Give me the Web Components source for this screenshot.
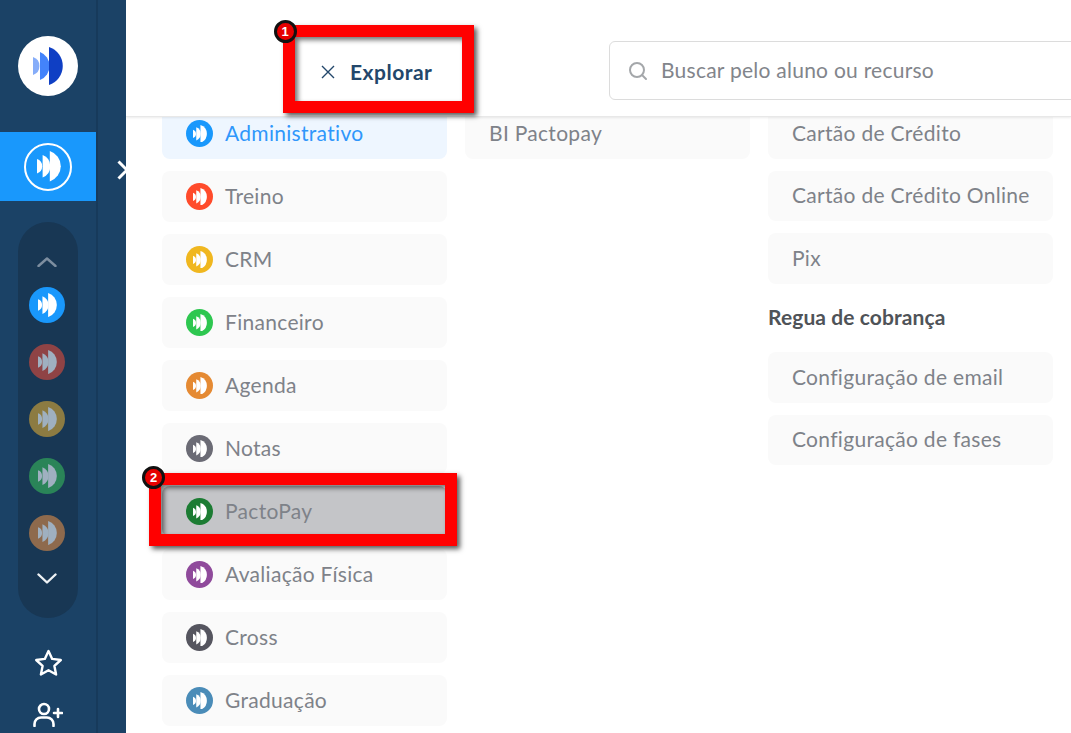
<!DOCTYPE html>
<html lang="pt">
<head>
<meta charset="utf-8">
<title>Explorar</title>
<style>
html, body {
    margin: 0;
    height: 733px;
    overflow: hidden;
    background: white;
    font-family: "Lato", "Noto Sans", sans-serif;
}
#page {
    display: flex;
    height: 733px;
}
</style>
</head>
<body>
<div id="page">
    <app-sidebar></app-sidebar>
    <app-main></app-main>
</div>

<script>
const GLYPH = `
<path class="a" d="M0 10A9.5 9.5 0 0 1 0 28Z"/>
<path class="b" d="M7 5A15 15 0 0 1 7 33Z"/>
<path class="c" d="M16 0A20 20 0 0 1 16 38Z"/>`

// round coloured badge with the three-sail glyph
class MarkIcon extends HTMLElement {
    constructor() {
        super()
        const size = this.getAttribute('size') || 27
        const color = this.getAttribute('color') || '#1998fc'
        const ink = this.getAttribute('ink') || '#ffffff'
        const glyph = this.getAttribute('glyph') || size * 0.52
        this.attachShadow({mode: 'open'}).innerHTML = `
<style>
:host {
    display: flex;
    flex: none;
    align-items: center;
    justify-content: center;
    width: ${size}px;
    height: ${size}px;
    border-radius: 50%;
    background: ${color};
}
svg {
    display: block;
    fill: ${ink};
    margin-left: 1px;
}
</style>
<svg width="${glyph}" viewBox="0 0 30 38">${GLYPH}</svg>`
    }
}
customElements.define('mark-icon', MarkIcon)

class AppSidebar extends HTMLElement {
    constructor() {
        super()
        const dim = [['#8f4345'], ['#8c7b42'], ['#2a8458'], ['#8e6a4d']]
        this.attachShadow({mode: 'open'}).innerHTML = `
<style>
:host {
    display: block;
    flex: none;
    position: relative;
    width: 126px;
    height: 733px;
    overflow: hidden;
    background: #1b4266;
}
#rail {
    box-sizing: content-box;
    width: 96px;
    height: 733px;
    border-right: 2px solid #173a5b;
    display: flex;
    flex-direction: column;
    align-items: center;
}
#logo {
    margin-top: 36px;
    width: 60px;
    height: 60px;
    border-radius: 50%;
    background: white;
    display: flex;
    align-items: center;
    justify-content: center;
}
#logo svg { display: block; margin-left: -1px; }
#logo .a { fill: #86adf9; }
#logo .b { fill: #4383fb; }
#logo .c { fill: #0f3fc4; }
#active {
    margin-top: 36px;
    width: 96px;
    height: 69px;
    background: #1998fc;
    display: flex;
    align-items: center;
    justify-content: center;
}
#ring {
    box-sizing: border-box;
    width: 48px;
    height: 48px;
    border: 2px solid white;
    border-radius: 50%;
    display: flex;
    align-items: center;
    justify-content: center;
}
#ring svg { display: block; fill: white; margin-left: 2px; }
#pill {
    box-sizing: border-box;
    margin-top: 21px;
    width: 60px;
    height: 396px;
    border-radius: 30px;
    background: #183754;
    padding-top: 35px;
    display: flex;
    flex-direction: column;
    align-items: center;
}
#pill mark-icon { margin: 0 2px 21px 0; }
.chev { display: block; fill: none; stroke-linecap: round; stroke-linejoin: round; margin-right: 2px; }
#up { stroke: #7d8ea0; margin-bottom: 20px; }
#down { stroke: #eef2f5; margin-top: 1px; }
#star { display: block; margin-top: 31px; }
#user { display: block; margin-top: 25px; }
#arrow { position: absolute; left: 116px; top: 159px; }
</style>
<div id="rail">
    <div id="logo"><svg width="30" viewBox="0 0 30 38">${GLYPH}</svg></div>
    <div id="active"><div id="ring"><svg width="24" viewBox="0 0 30 38">${GLYPH}</svg></div></div>
    <div id="pill">
        <svg id="up" class="chev" width="20" height="10" viewBox="0 0 20 10" stroke-width="2.4"><path d="M1.5 9L10 1.5L18.5 9"/></svg>
        <mark-icon size="36" glyph="19" color="#1998fc"></mark-icon>
        ${dim.map(d => `<mark-icon size="36" glyph="19" color="${d[0]}" ink="#9fb0c0"></mark-icon>`).join('')}
        <svg id="down" class="chev" width="20" height="11" viewBox="0 0 20 11" stroke-width="2.4"><path d="M1.5 1.5L10 9.5L18.5 1.5"/></svg>
    </div>
    <svg id="star" width="29" height="28" viewBox="0 0 29 28" fill="none" stroke="white" stroke-width="2.4" stroke-linejoin="round"><path d="M14.5 2l3.7 7.9 8.6 1.1-6.4 5.9 1.7 8.6-7.6-4.3-7.6 4.3 1.7-8.6L2.2 11l8.6-1.1z"/></svg>
    <svg id="user" width="30" height="25" viewBox="0 0 30 25" fill="none" stroke="white" stroke-width="2.6" stroke-linecap="round"><circle cx="11" cy="7" r="5"/><path d="M1.5 24v-2a6.5 6.5 0 0 1 6.5-6.5h6a6.5 6.5 0 0 1 6.5 6.5v2"/><path d="M25 7v8M21 11h8"/></svg>
</div>
<svg id="arrow" width="14" height="22" viewBox="0 0 14 22" fill="none" stroke="white" stroke-width="3"><path d="M2.5 2.5L11 11L2.5 19.5"/></svg>`
    }
}
customElements.define('app-sidebar', AppSidebar)

class MenuItem extends HTMLElement {
    constructor() {
        super()
        const color = this.getAttribute('color')
        this.attachShadow({mode: 'open'}).innerHTML = `
<style>
:host {
    box-sizing: border-box;
    display: flex;
    flex: none;
    align-items: center;
    gap: 12px;
    height: var(--item-height, 51px);
    padding-left: 24px;
    border-radius: 8px;
    background: #fafafa;
    color: #7e8289;
    font-size: 21px;
    letter-spacing: .3px;
    white-space: nowrap;
}
:host([active]) {
    background: #eef6ff;
    color: #2f97fb;
}
:host([marked]) { background: #c4c5c8; }
span { position: relative; top: -1px; }
</style>
${color ? `<mark-icon color="${color}" size="27" glyph="14"></mark-icon>` : ''}
<span><slot></slot></span>`
    }
}
customElements.define('menu-item', MenuItem)

// red tutorial frame with numbered badge, drawn over the screenshot
class CalloutBox extends HTMLElement {
    constructor() {
        super()
        this.attachShadow({mode: 'open'}).innerHTML = `
<style>
:host {
    box-sizing: border-box;
    display: block;
    position: absolute;
    z-index: 5;
    border: 12px solid #ff0000;
    box-shadow: 3px 3px 5px rgba(0, 0, 0, .65), inset 3px 3px 5px rgba(0, 0, 0, .55);
}
#badge {
    box-sizing: border-box;
    position: absolute;
    left: var(--badge-x);
    top: var(--badge-y);
    width: 23px;
    height: 23px;
    border-radius: 50%;
    border: 3px solid #111;
    background: #e60000;
    color: white;
    font: 700 13px/17px "Liberation Sans", sans-serif;
    text-align: center;
}
</style>
<div id="badge"><slot></slot></div>`
    }
}
customElements.define('callout-box', CalloutBox)

class AppMain extends HTMLElement {
    constructor() {
        super()
        this.attachShadow({mode: 'open'}).innerHTML = `
<style>
:host {
    display: block;
    position: relative;
    flex: 1;
    min-width: 0;
    height: 733px;
    overflow: hidden;
    background: white;
}
header {
    position: relative;
    z-index: 2;
    box-sizing: border-box;
    height: 117px;
    background: white;
    border-bottom: 1px solid #e8e8e8;
    box-shadow: 0 1px 2px rgba(0, 0, 0, .08);
    display: flex;
    align-items: flex-start;
}
#explore {
    display: flex;
    align-items: center;
    gap: 15px;
    margin: 58px 0 0 195px;
    height: 26px;
    color: #23476b;
    font-size: 21px;
    letter-spacing: .5px;
    font-weight: 700;
    width: 288px;
    flex: none;
}
#explore svg { display: block; margin-top: 1px; }
#search {
    box-sizing: border-box;
    margin-top: 41px;
    flex: none;
    width: 600px;
    height: 59px;
    border: 1px solid #dcdcdc;
    border-radius: 6px;
    display: flex;
    align-items: center;
    gap: 13px;
    padding-left: 18px;
    color: #82858b;
    font-size: 21px;
    letter-spacing: .25px;
}
#search svg { display: block; flex: none; }
#search span { position: relative; top: -1px; }
#columns {
    display: grid;
    grid-template-columns: repeat(3, 285px);
    column-gap: 18px;
    padding-left: 36px;
    margin-top: -9px;
}
.col {
    display: flex;
    flex-direction: column;
}
#col1 { gap: 12px; }
#col2, #col3 { gap: 12px; --item-height: 50.5px; }
h3 {
    margin: 9px 0 0;
    height: 35.5px;
    font-size: 21px;
    letter-spacing: .1px;
    font-weight: 700;
    line-height: 24px;
    color: #4f5358;
}
#one { left: 157px; top: 25px; width: 191px; height: 88px; --badge-x: -21.5px; --badge-y: -17.5px; }
#two { left: 23px; top: 473px; width: 308px; height: 73px; --badge-x: -19px; --badge-y: -19.5px; }
</style>
<header>
    <div id="explore">
        <svg width="14" height="14" viewBox="0 0 14 14" fill="none" stroke="#23476b" stroke-width="1.4"><path d="M1 1L13 13M13 1L1 13"/></svg>
        <span>Explorar</span>
    </div>
    <div id="search">
        <svg width="20" height="20" viewBox="0 0 20 20" fill="none" stroke="#a4a7aa" stroke-width="2" stroke-linecap="round"><circle cx="9" cy="9" r="7"/><path d="M14 14l4 4"/></svg>
        <span>Buscar pelo aluno ou recurso</span>
    </div>
</header>
<div id="columns">
    <div class="col" id="col1">
        <menu-item color="#1998fc" active>Administrativo</menu-item>
        <menu-item color="#ff4b2b">Treino</menu-item>
        <menu-item color="#f0b71f">CRM</menu-item>
        <menu-item color="#2ec750">Financeiro</menu-item>
        <menu-item color="#e58a33">Agenda</menu-item>
        <menu-item color="#6b6b75">Notas</menu-item>
        <menu-item color="#1c7c33" marked>PactoPay</menu-item>
        <menu-item color="#8f4a9b">Avaliação Física</menu-item>
        <menu-item color="#55555f">Cross</menu-item>
        <menu-item color="#4a8cb8">Graduação</menu-item>
    </div>
    <div class="col" id="col2">
        <menu-item>BI Pactopay</menu-item>
    </div>
    <div class="col" id="col3">
        <menu-item>Cartão de Crédito</menu-item>
        <menu-item>Cartão de Crédito Online</menu-item>
        <menu-item>Pix</menu-item>
        <h3>Regua de cobrança</h3>
        <menu-item>Configuração de email</menu-item>
        <menu-item>Configuração de fases</menu-item>
    </div>
</div>
<callout-box id="one">1</callout-box>
<callout-box id="two">2</callout-box>`
    }
}
customElements.define('app-main', AppMain)
</script>
</body>
</html>
